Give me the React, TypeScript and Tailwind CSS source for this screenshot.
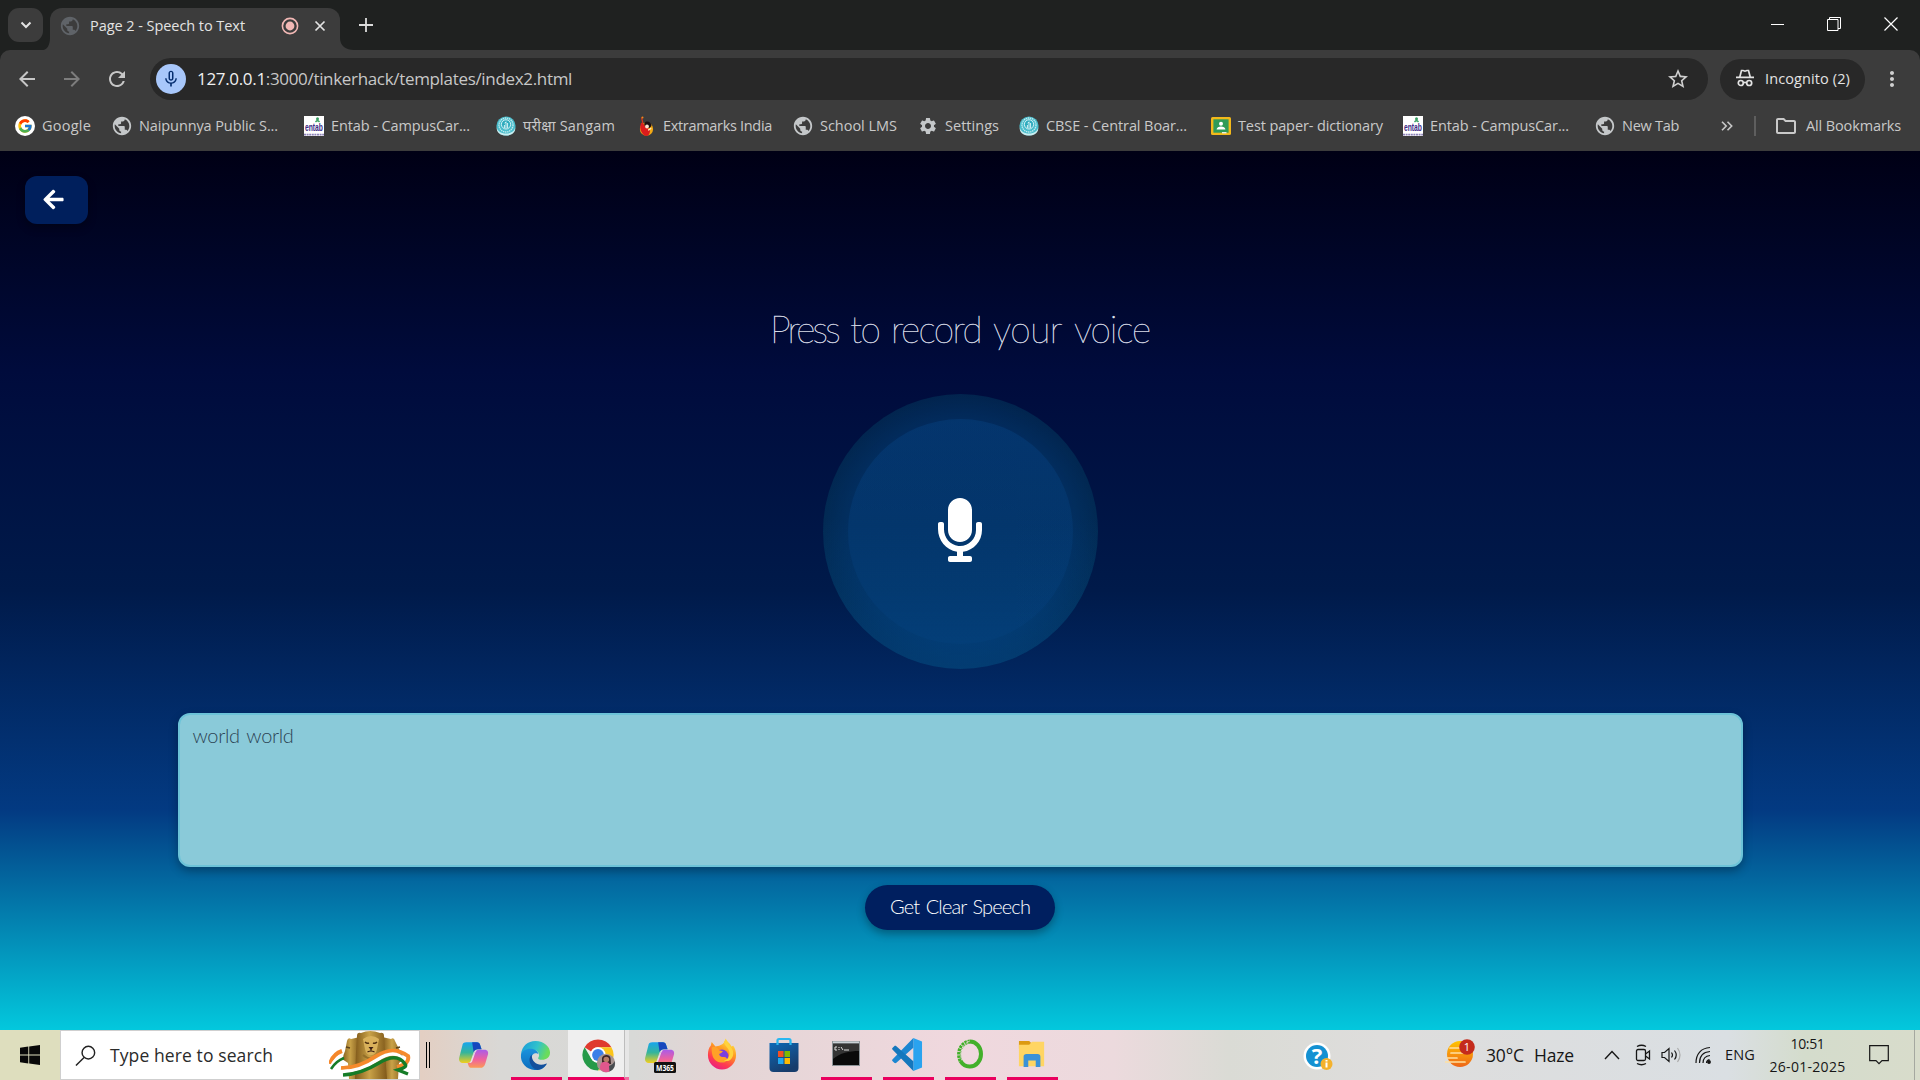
import { useLayoutEffect, useRef, useState } from "react";
import type { ReactNode } from "react";
import { FaArrowLeft, FaMicrophone } from "react-icons/fa";
import { FcGoogle } from "react-icons/fc";
import { MdArrowBack, MdArrowForward, MdMicNone, MdMoreVert, MdOutlineFolder, MdPublic, MdRefresh, MdSettings, MdStarBorder } from "react-icons/md";

/* Single-line label whose tracking is adjusted to fill a given width. */
function Label({ w, className = "", children }: { w: number; className?: string; children: ReactNode }) {
  const ref = useRef<HTMLSpanElement>(null);
  const [ls, setLs] = useState(0);
  useLayoutEffect(() => {
    const el = ref.current;
    if (!el) return;
    const n = (el.textContent || "").length;
    setLs((w - el.getBoundingClientRect().width) / Math.max(1, n));
  }, [w]);
  return (
    <span ref={ref} className={"inline-block shrink-0 whitespace-pre " + className} style={{ letterSpacing: ls }}>
      {children}
    </span>
  );
}

const Globe = () => <MdPublic className="size-[22px] -mx-0.5 text-[#c4c7c9]" />;

const Entab = () => (
  <svg viewBox="0 0 20 20" className="size-5">
    <rect width="20" height="20" fill="#fff" />
    <text x="1" y="15" fontSize="11" fontWeight="700" fontFamily="Liberation Sans" textLength="18" lengthAdjust="spacingAndGlyphs" fill="#3b2a85">entab</text>
    <circle cx="13.500" cy="2.800" r="1.500" fill="#3a9f62" />
    <path d="M11.500 6q2-2.500 4 0" stroke="#3a9f62" strokeWidth="1.300" fill="none" />
    <path d="M0 18.600h20" stroke="#8d83b8" strokeWidth="1.600" strokeDasharray="2 .6" />
  </svg>
);

const Cbse = () => (
  <svg viewBox="0 0 20 20" className="size-5">
    <circle cx="10" cy="10" r="9.600" fill="#49bccb" />
    <circle cx="10" cy="9" r="7" fill="none" stroke="#c6edf1" strokeWidth="1.300" strokeDasharray="1.400 .7" />
    <circle cx="10" cy="8.400" r="4.600" fill="#2daabd" stroke="#e6f8fa" strokeWidth=".9" />
    <path d="M8.600 7.300 10 5.800v6.600M11.600 7v5M8.400 9v3" stroke="#e9fbfc" strokeWidth=".9" fill="none" />
    <path d="M.8 11c.5 4 4 6.500 9.200 6.500s8.700-2.500 9.200-6.500c.8 5-3.200 8.600-9.200 8.600S0 16 .8 11z" fill="#c9eef1" />
  </svg>
);

const Extramarks = () => (
  <svg viewBox="0 0 20 20" className="size-5">
    <circle cx="10.500" cy="13" r="6.600" fill="#f3a914" />
    <path d="M5 7c2-1 3 2 5 4s4 1 4 4-2 5-4 5-4-3-5-5-1-5 0-8z" fill="#dc1c1c" />
    <path d="M8.500 7c2-3 7-1 7 3l-2 2c-3 0-6-2-5-5z" fill="#1b0f12" />
    <circle cx="11" cy="10.500" r="1.900" fill="#fbe3cf" />
    <path d="m5.500 1.500 1.500 6" stroke="#d8361d" strokeWidth="1.200" />
    <circle cx="6.500" cy="1.500" r="1" fill="#f18a1c" />
    <path d="M12 14q2 0 3-2" stroke="#fff0c0" strokeWidth="1.300" fill="none" />
  </svg>
);

const Classroom = () => (
  <svg viewBox="0 0 20 20" className="size-5">
    <rect y="1" width="20" height="18" rx="1.500" fill="#f3b91a" />
    <rect x="2.400" y="3.300" width="15.200" height="13.400" fill="#2f9b58" />
    <circle cx="10" cy="7.800" r="2" fill="#fff" />
    <path d="M5.600 13.500c0-4 8.800-4 8.800 0z" fill="#fff" />
    <path d="M11 16.700h4.500" stroke="#e7f0e8" strokeWidth="1.400" />
  </svg>
);

const GoogleBadge = () => (
  <span className="flex size-5 items-center justify-center rounded-full bg-white"><FcGoogle className="size-4" /></span>
);

const bookmarks: { cls: string; icon: ReactNode; text: string; w: number }[] = [
  { cls: "w-[97px]", icon: <GoogleBadge />, text: "Google", w: 49 },
  { cls: "w-[192px]", icon: <Globe />, text: "Naipunnya Public S...", w: 139 },
  { cls: "w-[192px]", icon: <Entab />, text: "Entab - CampusCar...", w: 139 },
  { cls: "w-[140px]", icon: <Cbse />, text: "परीक्षा Sangam", w: 93 },
  { cls: "w-[157px]", icon: <Extramarks />, text: "Extramarks India", w: 109 },
  { cls: "w-[125px]", icon: <Globe />, text: "School LMS", w: 77 },
  { cls: "w-[101px]", icon: <MdSettings className="size-5 text-[#c4c7c9]" />, text: "Settings", w: 54 },
  { cls: "w-[192px]", icon: <Cbse />, text: "CBSE - Central Boar...", w: 141 },
  { cls: "w-[192px]", icon: <Classroom />, text: "Test paper- dictionary", w: 145 },
  { cls: "w-[192px]", icon: <Entab />, text: "Entab - CampusCar...", w: 139 },
  { cls: "w-[127px]", icon: <Globe />, text: "New Tab", w: 57 },
];

function TabStrip() {
  return (
    <div className="flex h-[50px] items-end bg-[#1f2120]">
      <div className="mb-2 ml-2 flex h-[34px] w-[35px] items-center justify-center rounded-[11px] bg-[#3c3c3c]">
        <svg viewBox="0 0 12 8" className="h-2 w-3"><path d="m1.500 1.500 4.500 4.500 4.500-4.500" fill="none" stroke="#e3e3e3" strokeWidth="2" /></svg>
      </div>
      <svg viewBox="0 0 7 12" className="h-3 w-[7px]"><path d="M7 0v12H0c4 0 7-5 7-12z" fill="#3c3c3c" /></svg>
      <div className="flex h-[42px] w-[290px] items-center rounded-t-[12px] bg-[#3c3c3c] pb-1.5 pl-[9px]">
        <MdPublic className="size-[22px] text-[#5f6368]" />
        <Label w={155} className="ml-[9px] text-[14.5px] text-[#e3e3e3]">Page 2 - Speech to Text</Label>
        <svg viewBox="0 0 18 18" className="ml-9 size-[18px]"><circle cx="9" cy="9" r="7.600" fill="none" stroke="#f2b8b5" strokeWidth="1.600" /><circle cx="9" cy="9" r="4.400" fill="#f2b8b5" /></svg>
        <svg viewBox="0 0 12 12" className="ml-[15px] size-3"><path d="m1.500 1.500 9 9m0-9-9 9" stroke="#e3e3e3" strokeWidth="1.700" /></svg>
      </div>
      <svg viewBox="0 0 14 12" className="h-3 w-3.5"><path d="M0 0v12h14C6 12 0 8 0 0z" fill="#3c3c3c" /></svg>
      <svg viewBox="0 0 14 14" className="mb-[18px] ml-[5px] size-3.5"><path d="M7 0v14M0 7h14" stroke="#dcdcdc" strokeWidth="1.800" /></svg>
      <div className="mb-[19px] ml-auto mr-[22px] flex h-[14px] items-center gap-[43px]">
        <div className="h-px w-[13px] bg-white" />
        <svg viewBox="0 0 14 14" className="size-3.5"><path d="M.5 2.500h10.500v11H.5zM2.500 2.500V.5h11v11H11" fill="none" stroke="#fff" /></svg>
        <svg viewBox="0 0 14 14" className="size-3.5"><path d="m.5.5 13 13m0-13-13 13" stroke="#fff" strokeWidth="1.200" /></svg>
      </div>
    </div>
  );
}

function Toolbar() {
  return (
    <div className="flex h-[58px] items-center rounded-t-[10px] bg-[#3c3c3c] pl-[15px]">
      <MdArrowBack className="size-6 text-[#c7c7c7]" />
      <MdArrowForward className="ml-[21px] size-6 text-[#7d7d7d]" />
      <MdRefresh className="ml-[21px] size-6 text-[#c7c7c7]" />
      <div className="ml-[21px] flex h-[42px] w-[1558px] items-center rounded-full bg-[#282828] pl-[6px] pr-[18px]">
        <span className="flex size-[30px] items-center justify-center rounded-full bg-[#a8c7fa]"><MdMicNone className="size-5 text-[#062e6f]" /></span>
        <Label w={375} className="ml-[11px] text-[17px] text-[#c7c7c7]"><span className="text-[#f0f0f0]">127.0.0.1</span>:3000/tinkerhack/templates/index2.html</Label>
        <MdStarBorder className="ml-auto size-6 text-[#d0d0d0]" />
      </div>
      <div className="ml-3 flex h-[41px] w-[145px] items-center rounded-full bg-[#282828] pl-4">
        <svg viewBox="0 0 18 18" className="-mt-0.5 size-[18px]" fill="none" stroke="#e3e3e3" strokeWidth="1.700">
          <path d="M0 8.300h18M3.800 8 5.500 1.500h1.600l1.900.7 1.900-.7h1.600L14.200 8" />
          <circle cx="4.800" cy="14" r="2.500" /><circle cx="13.200" cy="14" r="2.500" /><path d="M7.300 13.500h3.400" />
        </svg>
        <Label w={85} className="ml-[11px] text-[14.5px] text-[#e3e3e3]">Incognito (2)</Label>
      </div>
      <MdMoreVert className="ml-[15px] size-6 text-[#d0d0d0]" />
    </div>
  );
}

function BookmarkBar() {
  return (
    <div className="flex h-[43px] items-center bg-[#3c3c3c] pb-[7px] pl-[15px] text-[14.5px] text-[#c9c9c9]">
      {bookmarks.map((b, i) => (
        <div key={i} className={"flex shrink-0 items-center " + b.cls}>
          <span className="mr-[7px] flex w-5 shrink-0 justify-center">{b.icon}</span>
          <Label w={b.w}>{b.text}</Label>
        </div>
      ))}
      <svg viewBox="0 0 12 10" className="-ml-px h-2.5 w-3 shrink-0"><path d="m1 .8 4.200 4.200L1 9.200M6.500.8 10.700 5 6.500 9.200" fill="none" stroke="#c9c9c9" strokeWidth="1.600" /></svg>
      <div className="ml-[21px] h-5 w-0.5 shrink-0 bg-[#5e5e5e]" />
      <MdOutlineFolder className="ml-[18px] size-6 shrink-0" />
      <Label w={95} className="ml-2">All Bookmarks</Label>
    </div>
  );
}

function SpeechPage() {
  return (
    <main className="flex h-[879px] flex-col items-center bg-[linear-gradient(180deg,#000015_0%,#000b3c_25%,#001a4a_50%,#033a82_75%,#03c8dd_100%)] pt-[25px]">
      <button className="ml-[25px] flex h-12 w-[63px] items-center self-start rounded-xl bg-[#001f5c] pb-0.5 pl-[17px] shadow-[0_4px_8px_rgba(0,0,0,0.3)]">
        <FaArrowLeft className="size-[23px] text-white" />
      </button>
      <h1 className="mt-[80px] flex h-[50px] items-center gap-3 font-[Lato] text-[37px] font-thin text-[#eceef4] [-webkit-text-stroke:0.4px_#d5d9e6]">
        <Label w={68}>Press</Label>
        <Label w={29}>to</Label>
        <Label w={90}>record</Label>
        <Label w={69}>your</Label>
        <Label w={76}>voice</Label>
      </h1>
      <div className="mt-[40px] flex size-[275px] items-center justify-center rounded-full bg-[linear-gradient(180deg,rgba(4,72,135,0)_45%,rgba(4,72,135,0.4)_100%),radial-gradient(circle_closest-side,rgba(5,84,135,0.42)_80%,rgba(5,84,112,0.33)_100%)]">
        <div className="flex size-[225px] items-center justify-center rounded-full bg-[linear-gradient(180deg,rgba(8,76,146,0.3),rgba(8,76,146,0.12))] pb-[3px]">
          <FaMicrophone className="size-16 text-white" />
        </div>
      </div>
      <div className="mt-11 h-[154px] w-[1565px] rounded-xl border-2 border-[#6cc3d8] bg-[#8acad9] px-[13px] pt-[6px] font-[Lato] text-[20px] font-light leading-7 text-[#2c4354] shadow-[0_4px_10px_rgba(0,0,0,0.3)] [word-spacing:2px]">
        <Label w={101}>world world</Label>
      </div>
      <button className="mt-[18px] flex h-[45px] w-[190px] items-center justify-center rounded-full bg-[#001f5f] pb-[3px] font-[Lato] text-[20px] font-light text-white shadow-[0_4px_8px_rgba(0,0,0,0.3)] [word-spacing:2px]">
        <Label w={140}>Get Clear Speech</Label>
      </button>
    </main>
  );
}

const Copilot = ({ m365 = false }: { m365?: boolean }) => (
  <svg viewBox="0 0 32 36" className="h-9 w-8">
    <defs>
      <linearGradient id="cpA" x1="0" y1="0" x2="0" y2="1"><stop offset="0" stopColor="#17a5ee" /><stop offset=".5" stopColor="#35b59b" /><stop offset="1" stopColor="#f2cf1c" /></linearGradient>
      <linearGradient id="cpB" x1="0" y1="0" x2="0" y2="1"><stop offset="0" stopColor="#a95bea" /><stop offset=".55" stopColor="#f0629c" /><stop offset="1" stopColor="#fb9a55" /></linearGradient>
    </defs>
    <g transform="translate(1 3.500) scale(.94 .88)">
      <path d="M8 2h11c2 0 3 1 3.500 3l1.500 5h-4c-3 0-4 2-5 5l-2.500 8c-.5 2-1.500 2.500-3.500 2.500H5c-4 0-5.500-2.500-4.800-6L3.500 6C4 3 5 2 8 2z" fill="url(#cpA)" />
      <path d="M14 2h5c2 0 3 1 3.500 3l1.500 5h-4c-2 0-3.500 1-4.500 3z" fill="#1747bd" />
      <path d="M21 10.500h6c3.500 0 4.500 2.500 3.800 5.500L28 26c-1 3.500-2.500 5-5.500 5h-9c-2 0-3-1-3.500-3l-.8-2.500c3 0 4-1 4.800-4l2.500-8c.500-2 1.500-3 4.500-3z" fill="url(#cpB)" />
      <path d="M17.500 11.500h2c-2 1-2.500 3-3.500 6.500l-2 6c-.4 1-1 1.500-2 1.500h-1c1.500-1 2-2.500 3-6z" fill="#e9e2ea" />
    </g>
    {m365 && <><rect x="10" y="25" width="22" height="11" rx="1.500" fill="#111" /><text x="12" y="33.500" fontSize="8.500" fontWeight="700" fontFamily="Open Sans, sans-serif" fill="#fff" textLength="18" lengthAdjust="spacingAndGlyphs">M365</text></>}
  </svg>
);

const Edge = () => (
  <svg viewBox="0 0 32 32" className="h-[31px] w-[31px]">
    <defs>
      <linearGradient id="edA" x1="0" y1="0" x2="1" y2=".3"><stop offset="0" stopColor="#1697dc" /><stop offset=".6" stopColor="#32c3cb" /><stop offset="1" stopColor="#6bdc5b" /></linearGradient>
      <linearGradient id="edB" x1="0" y1="0" x2="0" y2="1"><stop offset="0" stopColor="#1b93dd" /><stop offset="1" stopColor="#0c6cbd" /></linearGradient>
    </defs>
    <path d="M1 15C2 6 8 1 16 1c9 0 15 6 15 12 0 5-4 7.500-8 7.500-3 0-5-1-4-2.500 2-2.500 0-8-6-8-6 0-11 3-12 5z" fill="url(#edA)" />
    <path d="M1 15c1-4 6-6.500 11-6 4 .4 7 3 7 6-1-2-7-2-7 4 0 7 8 10 15 6.500C24 30 20 31.500 15 31 7 30.500 0 24 1 15z" fill="url(#edB)" />
    <path d="M12 15c-5 5-1 14 6 16 4-.5 7.500-3 9.500-6 .4-.8 0-1-.8-.6C20 27.500 12 24 12 15z" fill="#134f9c" />
  </svg>
);

const Chrome = () => (
  <svg viewBox="0 0 34 36" className="h-9 w-[34px]">
    <path d="M2.600 9.200a15.500 15.500 0 0 1 26.800 0H16a7.800 7.800 0 0 0-6.900 4.300z" fill="#df3a2e" />
    <path d="M29.400 9.200A15.500 15.500 0 0 1 16 32.500l6.800-11.600c2-4 0-9-6.800-11.700z" fill="#fbc41a" />
    <path d="M2.600 9.200A15.500 15.500 0 0 0 16 32.500l5-8.700c-4 2-9 1-11.700-3z" fill="#269a49" />
    <circle cx="16" cy="17" r="7.700" fill="#fff" /><circle cx="16" cy="17" r="5.900" fill="#3c7fe8" />
    <circle cx="24" cy="25" r="9.200" fill="#a79390" />
    <path d="M20 20c1-4 8-4 8.500 0l.5 6H20z" fill="#3b2527" /><circle cx="24.300" cy="21.500" r="2.800" fill="#b77c68" />
    <path d="M18 31c0-8 3-7 6.500-7s4 4 3 9.500c-4 1.500-7 .5-9.500-2.500z" fill="#e1578d" /><path d="M27 28c3-1 5-3 5.500-5 1.500 5-1 9-5 10.500z" fill="#474c50" />
  </svg>
);

const Firefox = () => (
  <svg viewBox="0 0 32 36" className="h-9 w-[30px]">
    <defs>
      <linearGradient id="ffA" x1=".8" y1="0" x2=".3" y2="1"><stop offset="0" stopColor="#fff04a" /><stop offset=".4" stopColor="#ff9a20" /><stop offset=".75" stopColor="#ff3c4f" /><stop offset="1" stopColor="#e81d83" /></linearGradient>
    </defs>
    <path d="M20 0c1 4 5 5 6 9l2-1c2 3 3 6 3 10A15 15.500 0 0 1 1 18c0-5 1-8 3-10l1-4 4 5 4-1c3-1 6-3 7-8z" fill="url(#ffA)" />
    <circle cx="16" cy="19" r="6.800" fill="#7a3fe0" />
    <path d="M5 10c3-2 7 0 8 3l4 1c-1 2-3 2-4 3 0 2 2 4 5 3 3 0 4 2 3 4-3 4-13 2-15-5-1-4-1-6-1-9z" fill="#ffa127" />
    <path d="M18 4c0 4 6 6 6 12 0 4-2 7-6 8 5 2 10-2 10-8S22 7 20 1z" fill="#ffd23c" />
  </svg>
);

const Store = () => (
  <svg viewBox="0 0 30 36" className="h-9 w-[30px]">
    <defs><linearGradient id="st" x1="0" y1="0" x2=".5" y2="1"><stop stopColor="#0e69b7" /><stop offset="1" stopColor="#173c6b" /></linearGradient></defs>
    <path d="M.5 6h29v25a4 4 0 0 1-4 4h-21a4 4 0 0 1-4-4z" fill="url(#st)" />
    <path d="M8.500 8V3.500C8.500 2.600 9 2 10 2h10c1 0 1.500.6 1.500 1.500V8" fill="none" stroke="#29b7f0" strokeWidth="2.200" />
    <path d="M9 14h5.500v6H9z" fill="#f25022" /><path d="M15.500 14H21v6h-5.500z" fill="#7fba00" /><path d="M9 21h5.500v6H9z" fill="#21a8ef" /><path d="M15.500 21H21v6h-5.500z" fill="#ffb900" />
  </svg>
);

const Terminal = () => (
  <svg viewBox="0 0 28 26" className="mb-0.5 h-[26px] w-7">
    <rect x=".5" y=".5" width="27" height="24" fill="#0a0a0a" stroke="#8d9498" />
    <path d="M1 1.500h26" stroke="#c9d1d6" strokeWidth="2" /><path d="M1 3h26v7C17 10 8 12 1 18z" fill="#343434" />
    <path d="M3 6h2M3 9h2M3 6v3M7 6v1m0 1v1m2-3 2 3m1 0h5" stroke="#ddd" fill="none" />
  </svg>
);

const VsCode = () => (
  <svg viewBox="0 0 32 36" className="mb-0.5 h-[35px] w-[31px]">
    <path d="M22 1 31 4.500v27L22 35z" fill="#2aa3ef" />
    <path d="M22 1v10L4.500 26.500c-.8.700-1.500.6-2.200 0L.7 25c-.8-.8-.8-1.500 0-2.200z" fill="#1c86d1" />
    <path d="M22 35V25L4.500 9.500c-.8-.7-1.500-.6-2.200 0L.7 11c-.8.8-.8 1.500 0 2.200z" fill="#1477bd" />
  </svg>
);

const Anaconda = () => (
  <svg viewBox="0 0 28 34" className="mb-0.5 h-[34px] w-7">
    <path d="M14 4.500a11 12.500 0 0 1 0 25A11 12.500 0 0 1 4.500 24" fill="none" stroke="#43b02a" strokeWidth="4" />
    <path d="M4.500 24C1 16 4 6 14 4.500" fill="none" stroke="#43b02a" strokeWidth="4" strokeDasharray="2.500 .8" />
    <path d="M6 23C3 16 6 7 14 4" fill="none" stroke="#eadade" strokeWidth="1" strokeDasharray="1.500 1.500" />
  </svg>
);

const Explorer = () => (
  <svg viewBox="0 0 28 30" className="mb-0.5 h-[28px] w-7">
    <path d="M0 1h11l3 3v5H0z" fill="#dc9a12" /><path d="M0 5h11l3-3h13v26H0z" fill="#ffd563" />
    <path d="M5 29V18c0-2 1-3 3-3h12c2 0 3 1 3 3v11h-5v-7h-8v7z" fill="#3b92d8" />
  </svg>
);

const apps: { icon: ReactNode; open: boolean }[] = [
  { icon: <Copilot m365 />, open: false },
  { icon: <Firefox />, open: false },
  { icon: <Store />, open: false },
  { icon: <Terminal />, open: true },
  { icon: <VsCode />, open: true },
  { icon: <Anaconda />, open: true },
  { icon: <Explorer />, open: true },
];

function AppButton({ icon, open }: { icon: ReactNode; open: boolean }) {
  return (
    <div className={"flex h-full w-[51px] items-center justify-center border-b-[3px] pr-0.5 pt-[3px] " + (open ? "border-[#ea005e]" : "border-transparent")}>
      {icon}
    </div>
  );
}

const Lions = () => (
  <svg viewBox="0 0 82 48" className="h-12 w-[82px]">
    <defs><linearGradient id="li"><stop stopColor="#80591a" /><stop offset=".45" stopColor="#c9a248" /><stop offset="1" stopColor="#80591a" /></linearGradient></defs>
    <path d="M18 10q1-4 4-2l9-2-2 42H20l-1-16-6-4 3-8z" fill="url(#li)" />
    <path d="M66 10q-1-4-4-2l-9-2 2 42h14l1-16 5-4-4-8z" fill="url(#li)" />
    <path d="M28 5q0-4 4-3 9-4 19 0 4-1 4 3l1 16 2 27H26l1-27z" fill="url(#li)" />
    <path d="M34 8q8-6 16 0l-2 10q-1 6-6 6t-6-6z" fill="#d9b15b" />
    <path d="M36 11q2 2 4 1m4 0q2 1 4-1" stroke="#4e3011" strokeWidth="1.400" fill="none" />
    <path d="M39.500 16h5L42 19z" fill="#3a1d12" /><path d="M42 18v2m-3.500 1q3.500-2 7 0" stroke="#3a1d12" strokeWidth="1.100" fill="none" />
    <path d="M34 24q8 7 16 0" stroke="#94702a" strokeWidth="2" fill="none" />
    <path d="M17 16l4 1m50-1-4 1" stroke="#5d421a" strokeWidth="1.500" />
    <path d="M1 33Q4 23 13 20" stroke="#f5872a" strokeWidth="4" fill="none" /><path d="M2 36Q6 27 14 24" stroke="#fff" strokeWidth="3" fill="none" /><path d="M2 38Q7 30 15 27" stroke="#167c27" strokeWidth="2.500" fill="none" />
    <path d="M12 37Q28 38 46 26T79 25Q81 33 68 36" stroke="#f58a2c" strokeWidth="4" fill="none" />
    <path d="M12 40.500Q30 41 48 29T75 29" stroke="#fff" strokeWidth="3.600" fill="none" />
    <path d="M14 44Q32 43 50 32T76 33Q79 36 69 39l10 4" stroke="#167c27" strokeWidth="3.400" fill="none" />
  </svg>
);

function Tray() {
  return (
    <div className="flex h-full flex-1 items-center text-[#161616]">
      <svg viewBox="0 0 30 30" className="ml-[245px] mt-1 size-[30px]">
        <circle cx="14" cy="14" r="13.500" fill="#fff" /><circle cx="14" cy="14" r="11" fill="#1491d2" />
        <text x="14" y="22" textAnchor="middle" fontSize="22" fontWeight="700" fontFamily="Open Sans, sans-serif" fill="#fff">?</text>
        <circle cx="23.500" cy="22" r="6" fill="#f4b22d" /><path d="M23.500 20.500v5m0-7.500v1.500" stroke="#fff" strokeWidth="2" />
      </svg>
      <svg viewBox="0 0 30 34" className="ml-[112px] mb-1.5 h-[34px] w-[30px]">
        <defs><linearGradient id="hz" x1="0" y1="0" x2="0" y2="1"><stop stopColor="#ffc400" /><stop offset="1" stopColor="#ee6518" /></linearGradient></defs>
        <circle cx="15" cy="19" r="13" fill="url(#hz)" />
        <path d="M5 13h9M6 18h16M2 23h10M0 27h20" stroke="#ffe0a0" strokeWidth="1.700" strokeLinecap="round" />
        <circle cx="22" cy="12" r="7.800" fill="#c42b1c" />
        <text x="22" y="16.200" textAnchor="middle" fontSize="11" fontFamily="Open Sans, sans-serif" fill="#fff">1</text>
      </svg>
      <Label w={38} className="ml-[11px] text-[17.5px]">30°C</Label>
      <Label w={40} className="ml-[10px] text-[17.5px]">Haze</Label>
      <svg viewBox="0 0 16 10" className="ml-[30px] h-2.5 w-4"><path d="m1 9 7-7.500L15 9" fill="none" stroke="#161616" strokeWidth="1.400" /></svg>
      <svg viewBox="0 0 16 22" className="ml-[15px] h-[22px] w-4" fill="none" stroke="#161616" strokeWidth="1.300"><rect x="1.500" y="5.500" width="9" height="11" rx="1.500" /><path d="M10.500 10 14.500 7v8l-4-3M2 2.500q4.500-2.500 9 0M2 19.500q4.500 2.500 9 0" /></svg>
      <svg viewBox="0 0 21 18" className="ml-[10px] h-[18px] w-[21px]" fill="none" stroke="#161616" strokeWidth="1.200"><path d="M1 6.500h2.500L8 2.500v13L3.500 11.500H1zM10.500 6.500q2 2.500 0 5M13.500 4.500q3.500 4.500 0 9" /><path d="M16.500 2q5 7 0 14" stroke="#aaa" /></svg>
      <svg viewBox="0 0 16 18" className="ml-[13px] h-[18px] w-4" fill="none" stroke="#161616" strokeWidth="1.200"><path d="M1 17C1 8 6 2 15 1.500M4.500 17c0-7 4-11 10.500-11.500M8 17c0-4 2.500-7 7-7.500M11.500 17c0-2 1-3 3-3.500" /><circle cx="14" cy="16" r="1.300" fill="#161616" /></svg>
      <Label w={30} className="ml-[14px] text-[14.5px]">ENG</Label>
      <div className="ml-[14px] flex w-[77px] shrink-0 flex-col items-center pb-px text-[14px] leading-[23px]">
        <Label w={34}>10:51</Label>
        <Label w={76}>26-01-2025</Label>
      </div>
      <svg viewBox="0 0 20 20" className="ml-[23px] size-5"><path d="M.7.700h18.600v15H13l-3 3-3-3H.7z" fill="none" stroke="#161616" strokeWidth="1.200" /></svg>
      <div className="ml-auto mr-[5px] h-full w-px bg-[#a5a8a0]" />
    </div>
  );
}

function Taskbar() {
  return (
    <footer className="flex h-[50px] items-center overflow-hidden bg-[linear-gradient(90deg,#dedebe_0%,#dedebe_3%,#e3cfc3_22%,#d9d8d5_26%,#d8d9d7_33%,#e3d5d5_37%,#f0d8de_50%,#ecdadd_58%,#dadbd5_64%,#dedddc_72%,#dadfe3_90%,#d4dccc_94%,#d8dccb_100%)]">
      <svg viewBox="0 0 20 20" className="ml-5 mr-5 size-5 shrink-0"><path d="M0 2.800 8.300 1.500V9.500H0zM9.200 1.400 20 0v9.500H9.200zM0 10.500h8.300v8.100L0 17.300zM9.200 10.500H20V20L9.200 18.600z" fill="#080808" /></svg>
      <div className="flex h-full w-[360px] shrink-0 items-center border border-[#cfcfcf] bg-white">
        <svg viewBox="0 0 22 22" className="ml-3.5 size-[21px]"><circle cx="14" cy="8" r="6.600" fill="none" stroke="#222" strokeWidth="1.500" /><path d="m9.500 13-8.500 8.500" stroke="#222" strokeWidth="1.500" /></svg>
        <Label w={163} className="ml-[14px] text-[17.5px] text-[#2b2b2b]">Type here to search</Label>
        <div className="ml-auto mr-2"><Lions /></div>
      </div>
      <div className="ml-1.5 mr-[19px] h-[26px] w-1 shrink-0 border-x border-black" />
      <div className="flex h-full shrink-0 gap-[11px]">
        <AppButton icon={<Copilot />} open={false} />
        <AppButton icon={<Edge />} open />
      </div>
      <div className="ml-1.5 flex h-full w-[61px] shrink-0">
        <div className="flex w-[57px] items-center justify-center border-b-[3px] border-r border-b-[#ea005e] border-r-[#bdbdbd] bg-[#efefef] pl-1.5 pt-1"><Chrome /></div>
        <div className="w-1 border-b-[3px] border-[#f26ba0] bg-[#e6e6e6]" />
      </div>
      <div className="ml-[6px] flex h-full shrink-0 gap-[11px]">
        {apps.map((a, i) => <AppButton key={i} {...a} />)}
      </div>
      <Tray />
    </footer>
  );
}

export default function App() {
  return (
    <div className="h-[1080px] w-[1920px] overflow-hidden bg-[#1f2120] font-['Open_Sans','Noto_Sans',sans-serif]">
      <TabStrip />
      <Toolbar />
      <BookmarkBar />
      <SpeechPage />
      <Taskbar />
    </div>
  );
}
